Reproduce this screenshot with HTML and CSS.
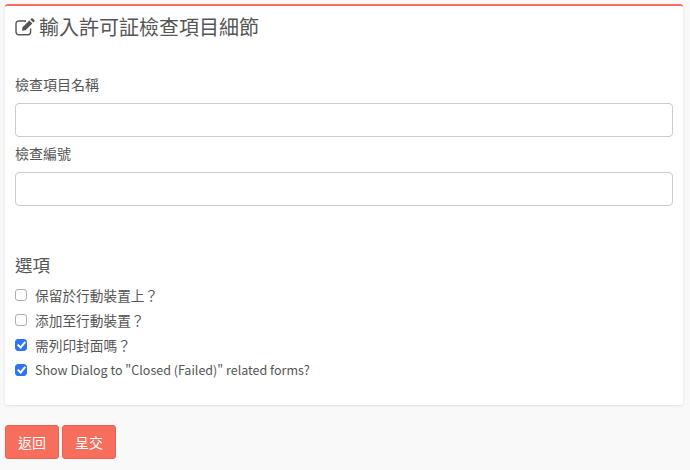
FILE: index.html
```html
<!DOCTYPE html>
<html lang="zh-Hant">
<head>
<meta charset="UTF-8">
<meta name="viewport" content="width=device-width, initial-scale=1.0">
<title>輸入許可証檢查項目細節</title>
<link rel="stylesheet" href="styles.css">
</head>
<body>
<div class="panel">
  <h3 class="panel-title">
    <svg class="edit-icon" viewBox="0 0 20 18" width="20" height="18" aria-hidden="true">
      <path d="M15.600 10.500v3.600a2.700 2.700 0 0 1-2.700 2.700H3.700A2.700 2.700 0 0 1 1 14.100V5.700A2.700 2.700 0 0 1 3.700 3h7.300" fill="none" stroke="#555" stroke-width="1.400"/>
      <path d="M7.500 9.300 14.400 2.400l3 3-6.900 6.900-3.500.5z" fill="#555"/>
      <path d="M15.300 1.500 16.300.5a1 1 0 0 1 1.400 0l1.600 1.600a1 1 0 0 1 0 1.400l-1 1z" fill="#555"/>
    </svg>
    輸入許可証檢查項目細節
  </h3>

  <div class="form-group first">
    <label for="itemName">檢查項目名稱</label>
    <input type="text" id="itemName" class="form-control">
  </div>
  <div class="form-group">
    <label for="itemNo">檢查編號</label>
    <input type="text" id="itemNo" class="form-control">
  </div>

  <h4 class="section-title">選項</h4>
  <div class="check-list">
    <label class="check"><input type="checkbox">保留於行動裝置上？</label>
    <label class="check"><input type="checkbox">添加至行動裝置？</label>
    <label class="check"><input type="checkbox" checked>需列印封面嗎？</label>
    <label class="check latin"><input type="checkbox" checked>Show Dialog to "Closed (Failed)" related forms?</label>
  </div>
</div>

<div class="button-group">
  <button type="button" class="btn">返回</button>
  <button type="button" class="btn">呈交</button>
</div>
</body>
</html>
```

FILE: styles.css
```css
body {
  margin: 0;
  padding: 4px 7px 0 5px;
  background-color: #f9f9f9;
  color: #555;
  font-family: "Noto Sans CJK TC", "Noto Sans", sans-serif;
  font-size: 14px;
  overflow: hidden;
}
.panel {
  height: 401px;
  box-sizing: border-box;
  padding: 0 10px;
  background-color: #fff;
  border-top: 2px solid #f76e5c;
  border-radius: 3px;
  box-shadow: 0 1px 3px rgba(0, 0, 0, 0.1);
}
.panel-title {
  display: flex;
  align-items: center;
  gap: 4px;
  margin: 0;
  padding-top: 7px;
  height: 28px;
  font-size: 20px;
  font-weight: 400;
  line-height: 28px;
}
.form-group {
  margin-bottom: 6px;
}
.form-group.first {
  margin-top: 33px;
}
.form-group label {
  display: block;
  height: 21px;
  margin-bottom: 8px;
  line-height: 21px;
}
.form-control {
  display: block;
  width: 100%;
  height: 34px;
  box-sizing: border-box;
  background-color: #fff;
  border: 1px solid #ccc;
  border-radius: 4px;
}
.section-title {
  margin: 46px 0 0;
  height: 26px;
  font-size: 17.500px;
  font-weight: 400;
  line-height: 26px;
}
.check-list {
  margin-top: 4px;
}
.check {
  display: flex;
  align-items: center;
  height: 25px;
  font-size: 13.700px;
}
.check.latin {
  font-size: 12.500px;
}
.check input {
  appearance: none;
  position: relative;
  width: 12px;
  height: 12px;
  margin: 0 8px 0 0;
  background-color: #fff;
  border: 1px solid #b0b0b0;
  border-radius: 3px;
}
.check input:checked {
  background-color: #2f74f0;
  border-color: #2f74f0;
}
/* tick inside a checked box */
.check input:checked::after {
  content: "";
  position: absolute;
  left: 3px;
  top: 0.500px;
  width: 3px;
  height: 6px;
  border: solid #fff;
  border-width: 0 2px 2px 0;
  transform: rotate(40deg);
}
.button-group {
  display: flex;
  gap: 3px;
  margin-top: 20px;
}
.btn {
  width: 54px;
  height: 34px;
  padding: 0;
  background-color: #f76e5c;
  color: #fff;
  border: 1px solid #ee5f4c;
  border-radius: 3px;
  font-family: inherit;
  font-size: 14px;
}
```
